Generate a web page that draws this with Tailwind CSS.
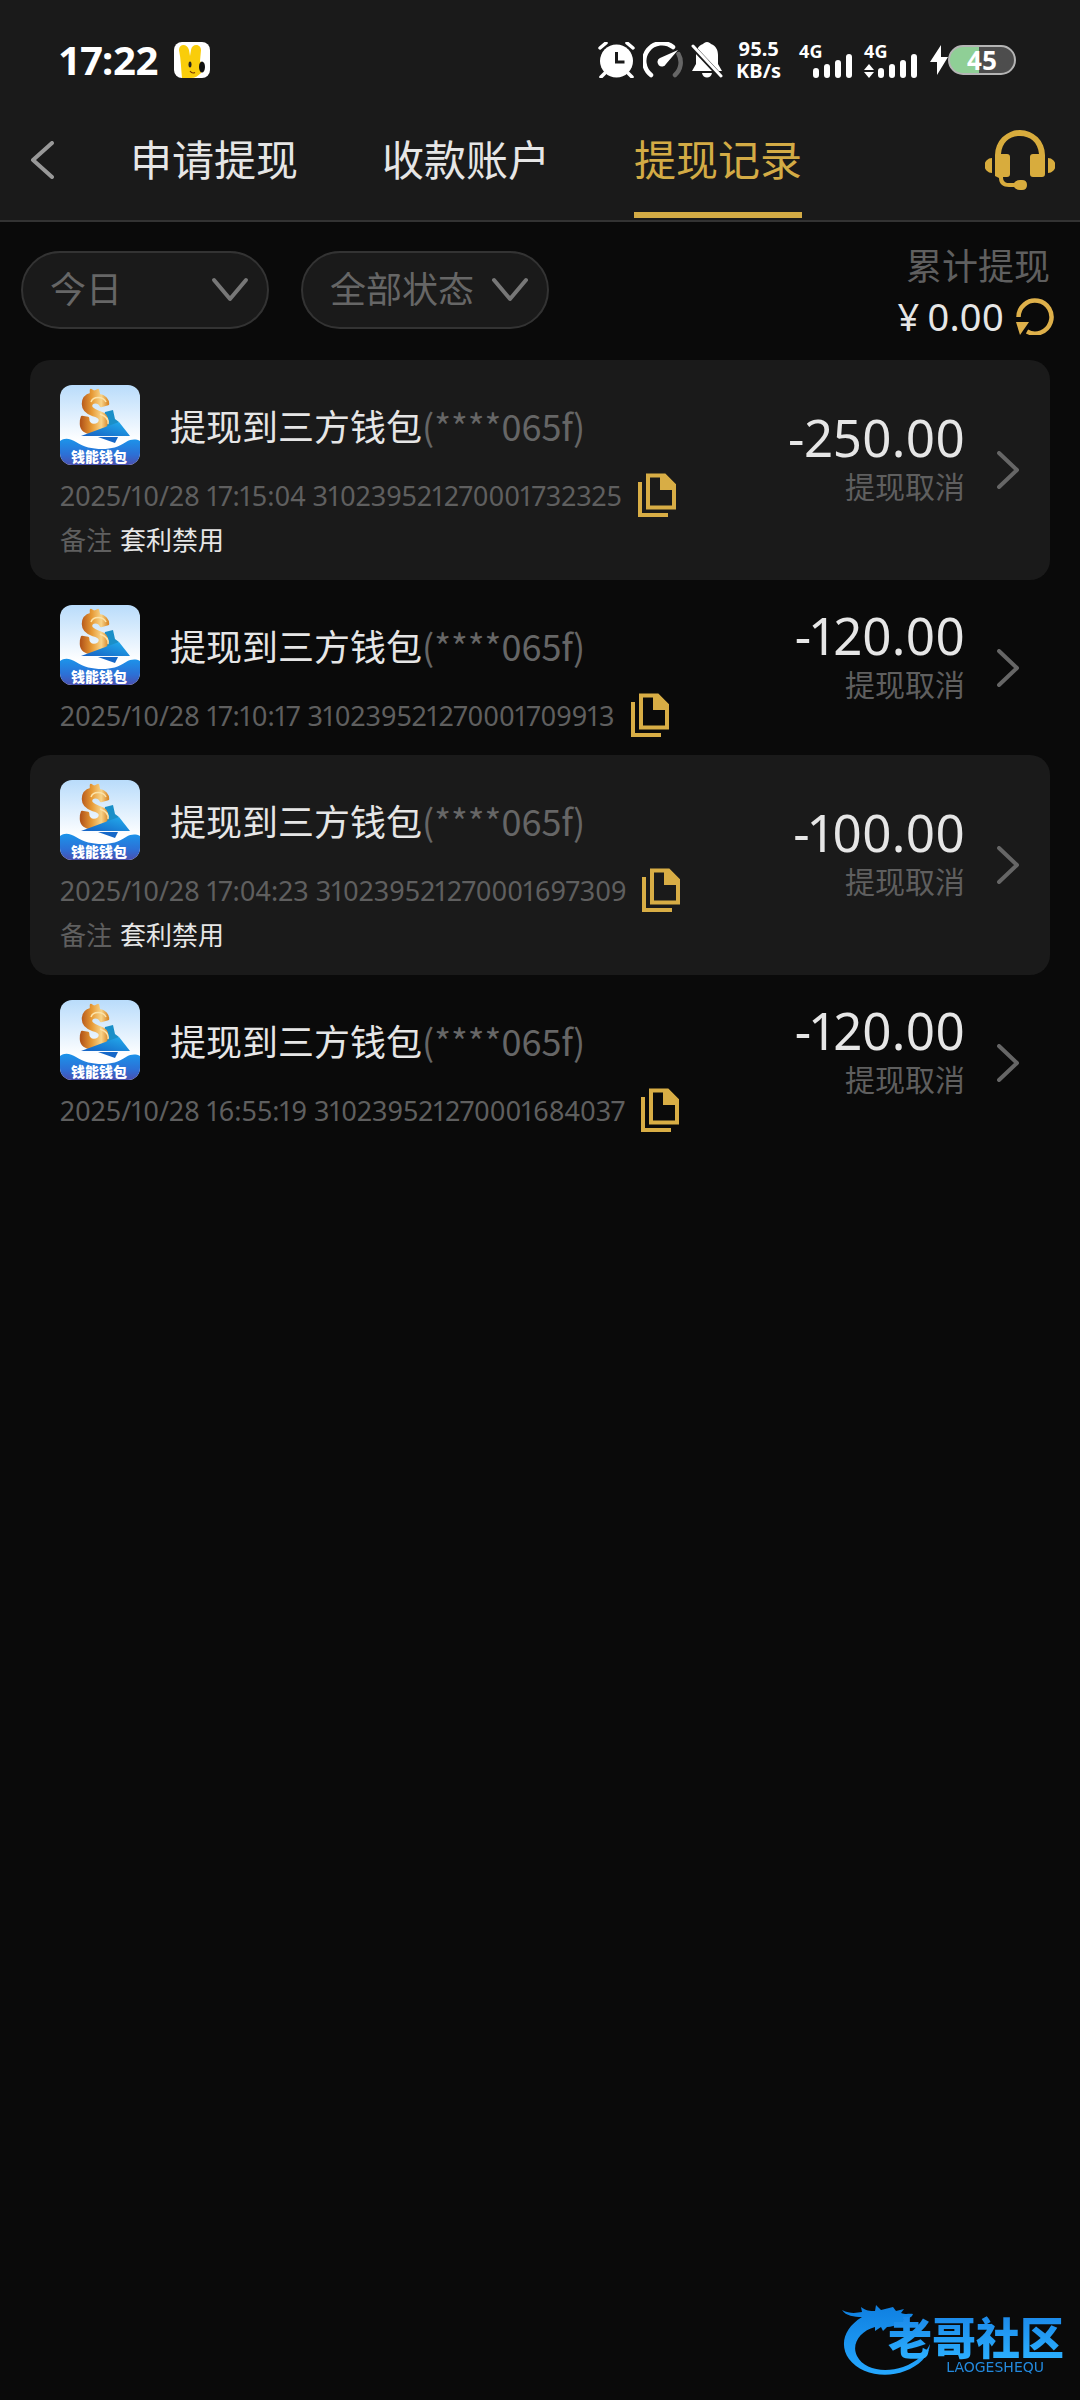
<!DOCTYPE html>
<html lang="zh-CN">
<head>
<meta charset="utf-8">
<meta name="viewport" content="width=device-width, initial-scale=1">
<title>提现记录</title>
<script src="https://cdn.jsdelivr.net/npm/@tailwindcss/browser@4"></script>
</head>
<body class="flex min-h-screen flex-col bg-[#0a0a0a] font-['Noto_Sans','Noto_Sans_CJK_SC',sans-serif] text-[#e6e6e6] proportional-nums">

<!-- Shared symbols -->
<svg class="absolute size-0" aria-hidden="true">
  <defs>
    <linearGradient id="sky" x1="0" y1="0" x2="0" y2="1"><stop offset="0" stop-color="#b9dcfb"/><stop offset=".7" stop-color="#ffffff"/></linearGradient>
    <linearGradient id="sea" x1="0" y1="0" x2="0" y2="1"><stop offset="0" stop-color="#1c94ea"/><stop offset=".6" stop-color="#2c70d6"/><stop offset="1" stop-color="#4a50b0"/></linearGradient>
    <linearGradient id="gold" x1="0" y1="0" x2="1" y2="0"><stop offset="0" stop-color="#b4561a"/><stop offset=".4" stop-color="#e79a35"/><stop offset=".75" stop-color="#f8d489"/><stop offset="1" stop-color="#d98a2b"/></linearGradient>
    <linearGradient id="plane" x1="0" y1="1" x2="1" y2="0"><stop offset="0" stop-color="#1560c4"/><stop offset="1" stop-color="#23b0ee"/></linearGradient>
    <clipPath id="tile"><rect width="80" height="80" rx="12"/></clipPath>
  </defs>
  <symbol id="wallet" viewBox="0 0 80 80">
    <g clip-path="url(#tile)">
      <rect width="80" height="80" fill="url(#sky)"/>
      <path d="M45 27l8-2 2 9 4 3-9 8-10 4z" fill="#1a8fc8"/>
      <path d="M31 5l3 2 4-2 1 5c6 1 9 5 9 9l-7 2c-2-5-10-5-10 0 0 3 3 4 8 6 6 2 9 5 8 10-1 7-8 11-15 11-6 0-11-3-11-9 0-3 0-5 1-7l6 1c0 5 2 7 6 7 3 0 6-2 6-5s-3-4-7-5c-6-2-10-5-10-11 0-6 4-9 8-10z" fill="url(#gold)" stroke="url(#gold)" stroke-width="2.500" stroke-linejoin="round"/>
      <path d="M31 17c2-6 12-6 15 0M40 29c6 2 9 5 8 10" fill="none" stroke="#fbe2a8" stroke-width="1.500"/>
      <path d="M21 51L59 37l11 14z" fill="url(#plane)"/>
      <path d="M38 52h20l-3 6z" fill="#1668c8"/>
      <path d="M0 56c5-4 11-2 16 1 8 5 16 7 26 7 10 0 16-2 24-7 5-3 10-3 14-1v24H0z" fill="url(#sea)"/>
    </g>
  </symbol>
  <symbol id="copy" viewBox="0 0 38 44">
    <path d="M2 9v33h28" fill="none" stroke="currentColor" stroke-width="4"/>
    <path d="M10 2.500h16.500L36 12v22.500H10z" fill="none" stroke="currentColor" stroke-width="4"/>
    <path d="M22 2h6l9 9v6H22z" fill="currentColor"/>
  </symbol>
  <symbol id="next" viewBox="0 0 22 38">
    <path d="M2 2l18 17L2 36" fill="none" stroke="currentColor" stroke-width="4" stroke-linecap="round" stroke-linejoin="round"/>
  </symbol>
  <symbol id="down" viewBox="0 0 38 26">
    <path d="M3 3l16 19L35 3" fill="none" stroke="currentColor" stroke-width="4" stroke-linecap="round" stroke-linejoin="round"/>
  </symbol>
  <symbol id="bars" viewBox="0 0 40 24">
    <path d="M3 17v4M14 13v8M25 9v12M36 3v18" fill="none" stroke="currentColor" stroke-width="6" stroke-linecap="round"/>
  </symbol>
</svg>

<header class="border-b-2 border-[#333] bg-[#1a1a1a]">
  <!-- Status bar -->
  <div class="flex h-[100px] items-center justify-between pt-5 pr-16 pl-[60px] text-white">
    <div class="flex items-center gap-4">
      <span class="text-[40px] leading-none font-bold">17:22</span>
      <svg class="size-9" viewBox="0 0 36 36" role="img" aria-label="通知">
        <rect width="36" height="36" rx="8" fill="#fff"/>
        <path d="M5 8c0-6 8-7 10 0l1 6 1-6c1-7 10-6 10 0l-1 11c3 4 4 9 1 12-3 3-6 5-10 5H8C7 27 7 17 5 8z" fill="#f9cd0b"/>
        <ellipse cx="16" cy="22.500" rx="1.500" ry="3" fill="#222"/><ellipse cx="28" cy="25" rx="3" ry="5.500" fill="#111"/>
        <path d="M16 29q2 3 5 1.500" fill="none" stroke="#7a3b00" stroke-width="1.200"/>
      </svg>
    </div>
    <div class="flex h-9 items-center">
      <svg class="h-9 w-[37px]" viewBox="0 0 37 36" role="img" aria-label="闹钟">
        <circle cx="18.500" cy="19" r="16.500" fill="#fff"/>
        <path d="M2 6l6-5M35 6l-6-5M7 31l-4 4M30 31l4 4" stroke="#fff" stroke-width="3.500" stroke-linecap="round"/>
        <path d="M18.500 10v10h8" fill="none" stroke="#1a1a1a" stroke-width="3"/>
      </svg>
      <svg class="ml-2 h-9 w-10" viewBox="0 0 40 36" role="img" aria-label="网速">
        <path d="M8 33a17 17 0 0 1 22-28" fill="none" stroke="#fff" stroke-width="4.500" stroke-linecap="round"/>
        <path d="M35.500 12A17 17 0 0 1 32 33" fill="none" stroke="#666" stroke-width="4.500" stroke-linecap="round"/>
        <path d="M35 8L23 22a4.500 4.500 0 1 1-6-6z" fill="#fff"/>
      </svg>
      <svg class="ml-2 h-9 w-8" viewBox="0 0 32 36" role="img" aria-label="静音">
        <path d="M16 0c2 0 3 1 4 2 5 2 7 6 7 11v9l4 7H1l4-7v-9c0-5 2-9 7-11 1-1 2-2 4-2zM11 31h10c-1 6-9 6-10 0z" fill="#fff"/>
        <path d="M0 3l31 33" stroke="#1a1a1a" stroke-width="5"/>
        <path d="M2 4l28 30" stroke="#fff" stroke-width="3" stroke-linecap="round"/>
      </svg>
      <div class="ml-[13px] text-center text-[20px] leading-[22px] font-bold">95.5<br>KB/s</div>
      <div class="relative ml-[18px] flex h-9 w-[54px] items-end justify-end">
        <span class="absolute top-0 left-0 text-[18px] leading-none font-bold">4G</span>
        <svg class="h-6 w-10"><use href="#bars"/></svg>
      </div>
      <div class="relative ml-[11px] flex h-9 w-[54px] items-end justify-between">
        <span class="absolute top-0 left-0 text-[18px] leading-none font-bold">4G</span>
        <svg class="h-[14px] w-[10px]" viewBox="0 0 10 14"><path d="M5 0l5 6H0zM5 14l5-6H0z" fill="#fff"/></svg>
        <svg class="h-6 w-10"><use href="#bars"/></svg>
      </div>
      <svg class="ml-3 h-8 w-[18px]" viewBox="0 0 18 32"><path d="M11 1L0 18h7v13L18 13h-7z" fill="#fff"/></svg>
      <div class="flex h-[30px] w-[68px] items-center justify-center rounded-full border-2 border-[#b5b5b5] bg-linear-to-r from-[#8fcf96] from-45% to-[#4d4d4d] to-45% text-[26px] leading-none font-bold">45</div>
    </div>
  </div>

  <!-- Page navigation -->
  <div class="flex h-[120px] items-center pr-[25px] pl-6">
    <button class="px-1.5 py-4 text-[#999]" aria-label="返回">
      <svg class="h-[38px] w-6" viewBox="0 0 24 38"><path d="M22 2L3 19l19 17" fill="none" stroke="currentColor" stroke-width="4" stroke-linecap="round" stroke-linejoin="round"/></svg>
    </button>
    <nav class="ml-[70px] flex grow gap-[84px] self-stretch pb-0.5 text-[42px] leading-none">
      <a href="#" class="flex items-center border-b-6 border-transparent pt-2">申请提现</a>
      <a href="#" class="flex items-center border-b-6 border-transparent pt-2">收款账户</a>
      <a href="#" class="flex items-center border-b-6 border-[#d3ab45] pt-2 text-[#d3ab45]" aria-current="page">提现记录</a>
    </nav>
    <button class="text-[#d8ac3d]" aria-label="客服">
      <svg class="h-[60px] w-[70px]" viewBox="0 0 70 60">
        <path d="M10 46V25a25 25 0 0 1 50 0v19q0 3-3 3H48q-3 0-3-3V27q0-3 3-3h6C53 12 45 6 35 6S17 12 16 24h6q3 0 3 3v17q0 3-3 3h-4c0 4 2 6 6 6h5q2-3 6-3h2q5 0 5 5t-5 5h-2q-4 0-6-3h-5c-6 0-10-3-10-9z" fill="currentColor"/>
        <path d="M7 28v15a7.500 7.500 0 0 1 0-15zM63 28v15a7.500 7.500 0 0 0 0-15z" fill="currentColor"/>
      </svg>
    </button>
  </div>
</header>

<main class="grow">
  <!-- Filters and total -->
  <section class="flex h-[138px] items-center justify-between pr-[26px] pb-0.5 pl-[21px]">
    <div class="flex gap-8">
      <label class="relative block text-[#666]">
        <select aria-label="日期" class="h-[78px] w-[248px] appearance-none rounded-full border-2 border-[#333] bg-[#1a1a1a] pl-[27px] text-[36px] leading-none">
          <option>今日</option>
        </select>
        <svg class="pointer-events-none absolute top-[26px] right-5 h-[26px] w-[38px] text-[#777]"><use href="#down"/></svg>
      </label>
      <label class="relative block text-[#666]">
        <select aria-label="状态" class="h-[78px] w-[248px] appearance-none rounded-full border-2 border-[#333] bg-[#1a1a1a] pl-[27px] text-[36px] leading-none">
          <option>全部状态</option>
        </select>
        <svg class="pointer-events-none absolute top-[26px] right-5 h-[26px] w-[38px] text-[#777]"><use href="#down"/></svg>
      </label>
    </div>
    <div class="flex flex-col items-end gap-0.5 pt-1">
      <div class="pr-1 text-[36px] leading-[46px] text-[#5f5f5f]">累计提现</div>
      <div class="flex items-center gap-3">
        <span class="flex gap-2 text-[38px] leading-[48px]"><span>¥</span><span>0.00</span></span>
        <button class="text-[#deb04a]" aria-label="刷新">
          <svg class="size-[38px]" viewBox="0 0 38 38">
            <path d="M2.500 20A16.500 16.500 0 1 1 11 34.500" fill="none" stroke="currentColor" stroke-width="4.500"/>
            <path d="M0 25h13L4 38z" fill="currentColor"/>
          </svg>
        </button>
      </div>
    </div>
  </section>

  <!-- Withdrawal records -->
  <ul class="mx-[30px]">
    <li class="flex items-center justify-between rounded-[20px] bg-[#1a1a1a] pr-[31px] pl-[30px]">
      <div class="pt-[25px] pb-[18px]">
        <div class="flex items-center gap-[30px]">
          <svg class="size-20" viewBox="0 0 80 80"><use href="#wallet"/><text x="11" y="77" class="fill-white font-['Noto_Sans_CJK_SC'] text-[14px] font-black">钱能钱包</text></svg>
          <div class="font-['Noto_Sans_CJK_SC'] text-[36px] leading-none">提现到三方钱包<span class="text-[#666]">(****065f)</span></div>
        </div>
        <div class="mt-2 flex items-center gap-4 text-[27px] leading-none text-[#5f5f5f]">
          <span>2025/10/28 17:15:04 310239521270001732325</span>
          <button class="text-[#d8ad45]" aria-label="复制"><svg class="h-11 w-[38px]"><use href="#copy"/></svg></button>
        </div>
        <div class="flex h-[45px] items-center gap-2 text-[26px] leading-none"><span class="text-[#5f5f5f]">备注</span><span>套利禁用</span></div>
      </div>
      <div class="flex items-center gap-8">
        <div class="pb-6 text-right"><div class="text-[51px] leading-[58px]">-250.00</div><div class="text-[30px] leading-[42px] text-[#5f5f5f]">提现取消</div></div>
        <button class="text-[#666]" aria-label="详情"><svg class="h-[38px] w-[22px]"><use href="#next"/></svg></button>
      </div>
    </li>
    <li class="flex items-center justify-between rounded-[20px] pr-[31px] pl-[30px]">
      <div class="pt-[25px] pb-[18px]">
        <div class="flex items-center gap-[30px]">
          <svg class="size-20" viewBox="0 0 80 80"><use href="#wallet"/><text x="11" y="77" class="fill-white font-['Noto_Sans_CJK_SC'] text-[14px] font-black">钱能钱包</text></svg>
          <div class="font-['Noto_Sans_CJK_SC'] text-[36px] leading-none">提现到三方钱包<span class="text-[#666]">(****065f)</span></div>
        </div>
        <div class="mt-2 flex items-center gap-4 text-[27px] leading-none text-[#5f5f5f]">
          <span>2025/10/28 17:10:17 310239521270001709913</span>
          <button class="text-[#d8ad45]" aria-label="复制"><svg class="h-11 w-[38px]"><use href="#copy"/></svg></button>
        </div>
      </div>
      <div class="flex items-center gap-8">
        <div class="pb-6 text-right"><div class="text-[51px] leading-[58px]">-120.00</div><div class="text-[30px] leading-[42px] text-[#5f5f5f]">提现取消</div></div>
        <button class="text-[#666]" aria-label="详情"><svg class="h-[38px] w-[22px]"><use href="#next"/></svg></button>
      </div>
    </li>
    <li class="flex items-center justify-between rounded-[20px] bg-[#1a1a1a] pr-[31px] pl-[30px]">
      <div class="pt-[25px] pb-[18px]">
        <div class="flex items-center gap-[30px]">
          <svg class="size-20" viewBox="0 0 80 80"><use href="#wallet"/><text x="11" y="77" class="fill-white font-['Noto_Sans_CJK_SC'] text-[14px] font-black">钱能钱包</text></svg>
          <div class="font-['Noto_Sans_CJK_SC'] text-[36px] leading-none">提现到三方钱包<span class="text-[#666]">(****065f)</span></div>
        </div>
        <div class="mt-2 flex items-center gap-4 text-[27px] leading-none text-[#5f5f5f]">
          <span>2025/10/28 17:04:23 310239521270001697309</span>
          <button class="text-[#d8ad45]" aria-label="复制"><svg class="h-11 w-[38px]"><use href="#copy"/></svg></button>
        </div>
        <div class="flex h-[45px] items-center gap-2 text-[26px] leading-none"><span class="text-[#5f5f5f]">备注</span><span>套利禁用</span></div>
      </div>
      <div class="flex items-center gap-8">
        <div class="pb-6 text-right"><div class="text-[51px] leading-[58px]">-100.00</div><div class="text-[30px] leading-[42px] text-[#5f5f5f]">提现取消</div></div>
        <button class="text-[#666]" aria-label="详情"><svg class="h-[38px] w-[22px]"><use href="#next"/></svg></button>
      </div>
    </li>
    <li class="flex items-center justify-between rounded-[20px] pr-[31px] pl-[30px]">
      <div class="pt-[25px] pb-[18px]">
        <div class="flex items-center gap-[30px]">
          <svg class="size-20" viewBox="0 0 80 80"><use href="#wallet"/><text x="11" y="77" class="fill-white font-['Noto_Sans_CJK_SC'] text-[14px] font-black">钱能钱包</text></svg>
          <div class="font-['Noto_Sans_CJK_SC'] text-[36px] leading-none">提现到三方钱包<span class="text-[#666]">(****065f)</span></div>
        </div>
        <div class="mt-2 flex items-center gap-4 text-[27px] leading-none text-[#5f5f5f]">
          <span>2025/10/28 16:55:19 310239521270001684037</span>
          <button class="text-[#d8ad45]" aria-label="复制"><svg class="h-11 w-[38px]"><use href="#copy"/></svg></button>
        </div>
      </div>
      <div class="flex items-center gap-8">
        <div class="pb-6 text-right"><div class="text-[51px] leading-[58px]">-120.00</div><div class="text-[30px] leading-[42px] text-[#5f5f5f]">提现取消</div></div>
        <button class="text-[#666]" aria-label="详情"><svg class="h-[38px] w-[22px]"><use href="#next"/></svg></button>
      </div>
    </li>
  </ul>
</main>

<!-- Community mark -->
<div class="fixed right-4 bottom-6 h-[72px] w-[222px]">
  <svg class="h-[72px] w-[96px]" viewBox="0 0 96 72" aria-hidden="true">
    <defs><linearGradient id="dragon" x1="0" y1="0" x2="0" y2="1"><stop offset="0" stop-color="#0f7fe0"/><stop offset="1" stop-color="#25a8ff"/></linearGradient></defs>
    <path d="M0 6c8 4 14 3 20 2l-1-5c5 4 9 4 14 4l1-6 5 5 12-3 3 4 8-2-3 4c6 2 8 0 12 1-1 4-6 5-10 5l9 4c-3 3-8 2-12 1-5 1-9 3-13 3l-4 4-2-4-6 4v-4C18 27 9 40 15 52c7 14 28 17 46 11 14-5 23-14 27-23-1 12-11 22-25 27-20 8-45 3-56-12C-3 41 2 24 20 13 12 13 4 12 0 6z" fill="url(#dragon)"/>
  </svg>
  <div class="absolute top-2 right-0 bg-linear-to-b from-[#1b86e8] to-[#2cb0ff] bg-clip-text font-['Noto_Sans_CJK_SC'] text-[44px] leading-[48px] font-black text-transparent">老哥社区</div>
  <div class="absolute top-[56px] right-5 font-['DejaVu_Sans'] text-[14px] leading-[14px] text-[#2389dd]">LAOGESHEQU</div>
</div>
</body>
</html>
